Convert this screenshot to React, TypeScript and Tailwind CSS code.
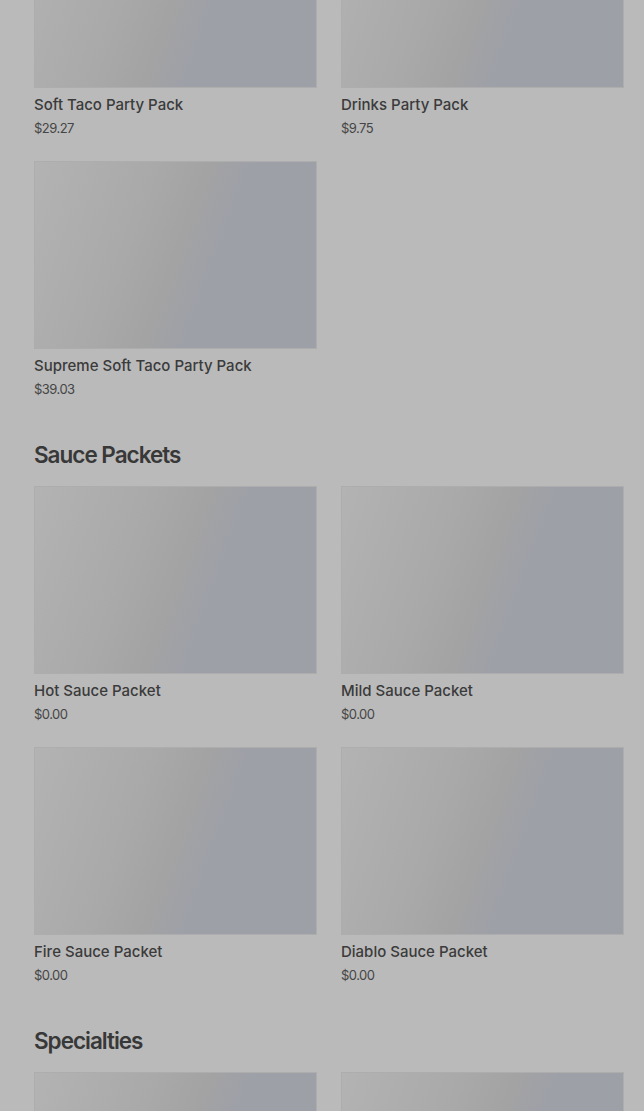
const SECTIONS = [
  {
    title: null as string | null,
    items: [
      { name: "Soft Taco Party Pack", price: "$29.27" },
      { name: "Drinks Party Pack", price: "$9.75" },
      { name: "Supreme Soft Taco Party Pack", price: "$39.03" },
    ],
  },
  {
    title: "Sauce Packets",
    items: [
      { name: "Hot Sauce Packet", price: "$0.00" },
      { name: "Mild Sauce Packet", price: "$0.00" },
      { name: "Fire Sauce Packet", price: "$0.00" },
      { name: "Diablo Sauce Packet", price: "$0.00" },
    ],
  },
  {
    title: "Specialties",
    items: [
      { name: "Mexican Pizza", price: "$5.49" },
      { name: "Crunchwrap Supreme", price: "$5.19" },
    ],
  },
];

function ItemCard({ name, price }: { name: string; price: string }) {
  return (
    <div className="flex flex-col">
      <div className="h-[188px] w-full border border-[#adadad] bg-[linear-gradient(110deg,#b3b3b3_0%,#a9a9a9_35%,#a3a3a3_50%,#9ea0a8_62%,#9ea0a8_100%)]" />
      <p className="mt-[6px] text-[15px] leading-[22px] font-medium text-[#3b3b3b]">{name}</p>
      <p className="mt-[2px] text-[13px] leading-[20px] text-[#454545] tracking-[-0.04em]">{price}</p>
    </div>
  );
}

export default function App() {
  return (
    <div
      className="min-h-screen bg-[#bababa] overflow-hidden"
      style={{ fontFamily: "Inter, 'Noto Sans', sans-serif" }}
    >
      <div className="-mt-[100px] pl-[34px] pr-[20px]">
        {SECTIONS.map((s, i) => (
          <section key={i} className={i === 0 ? "" : "mt-[43px]"}>
            {s.title && (
              <h2 className="mb-[18px] text-[22.5px] leading-[26px] font-semibold tracking-[-0.045em] text-[#383838]">
                {s.title}
              </h2>
            )}
            <div className="grid grid-cols-2 gap-x-[24px] gap-y-[23px]">
              {s.items.map((it) => (
                <ItemCard key={it.name} {...it} />
              ))}
            </div>
          </section>
        ))}
      </div>
    </div>
  );
}
